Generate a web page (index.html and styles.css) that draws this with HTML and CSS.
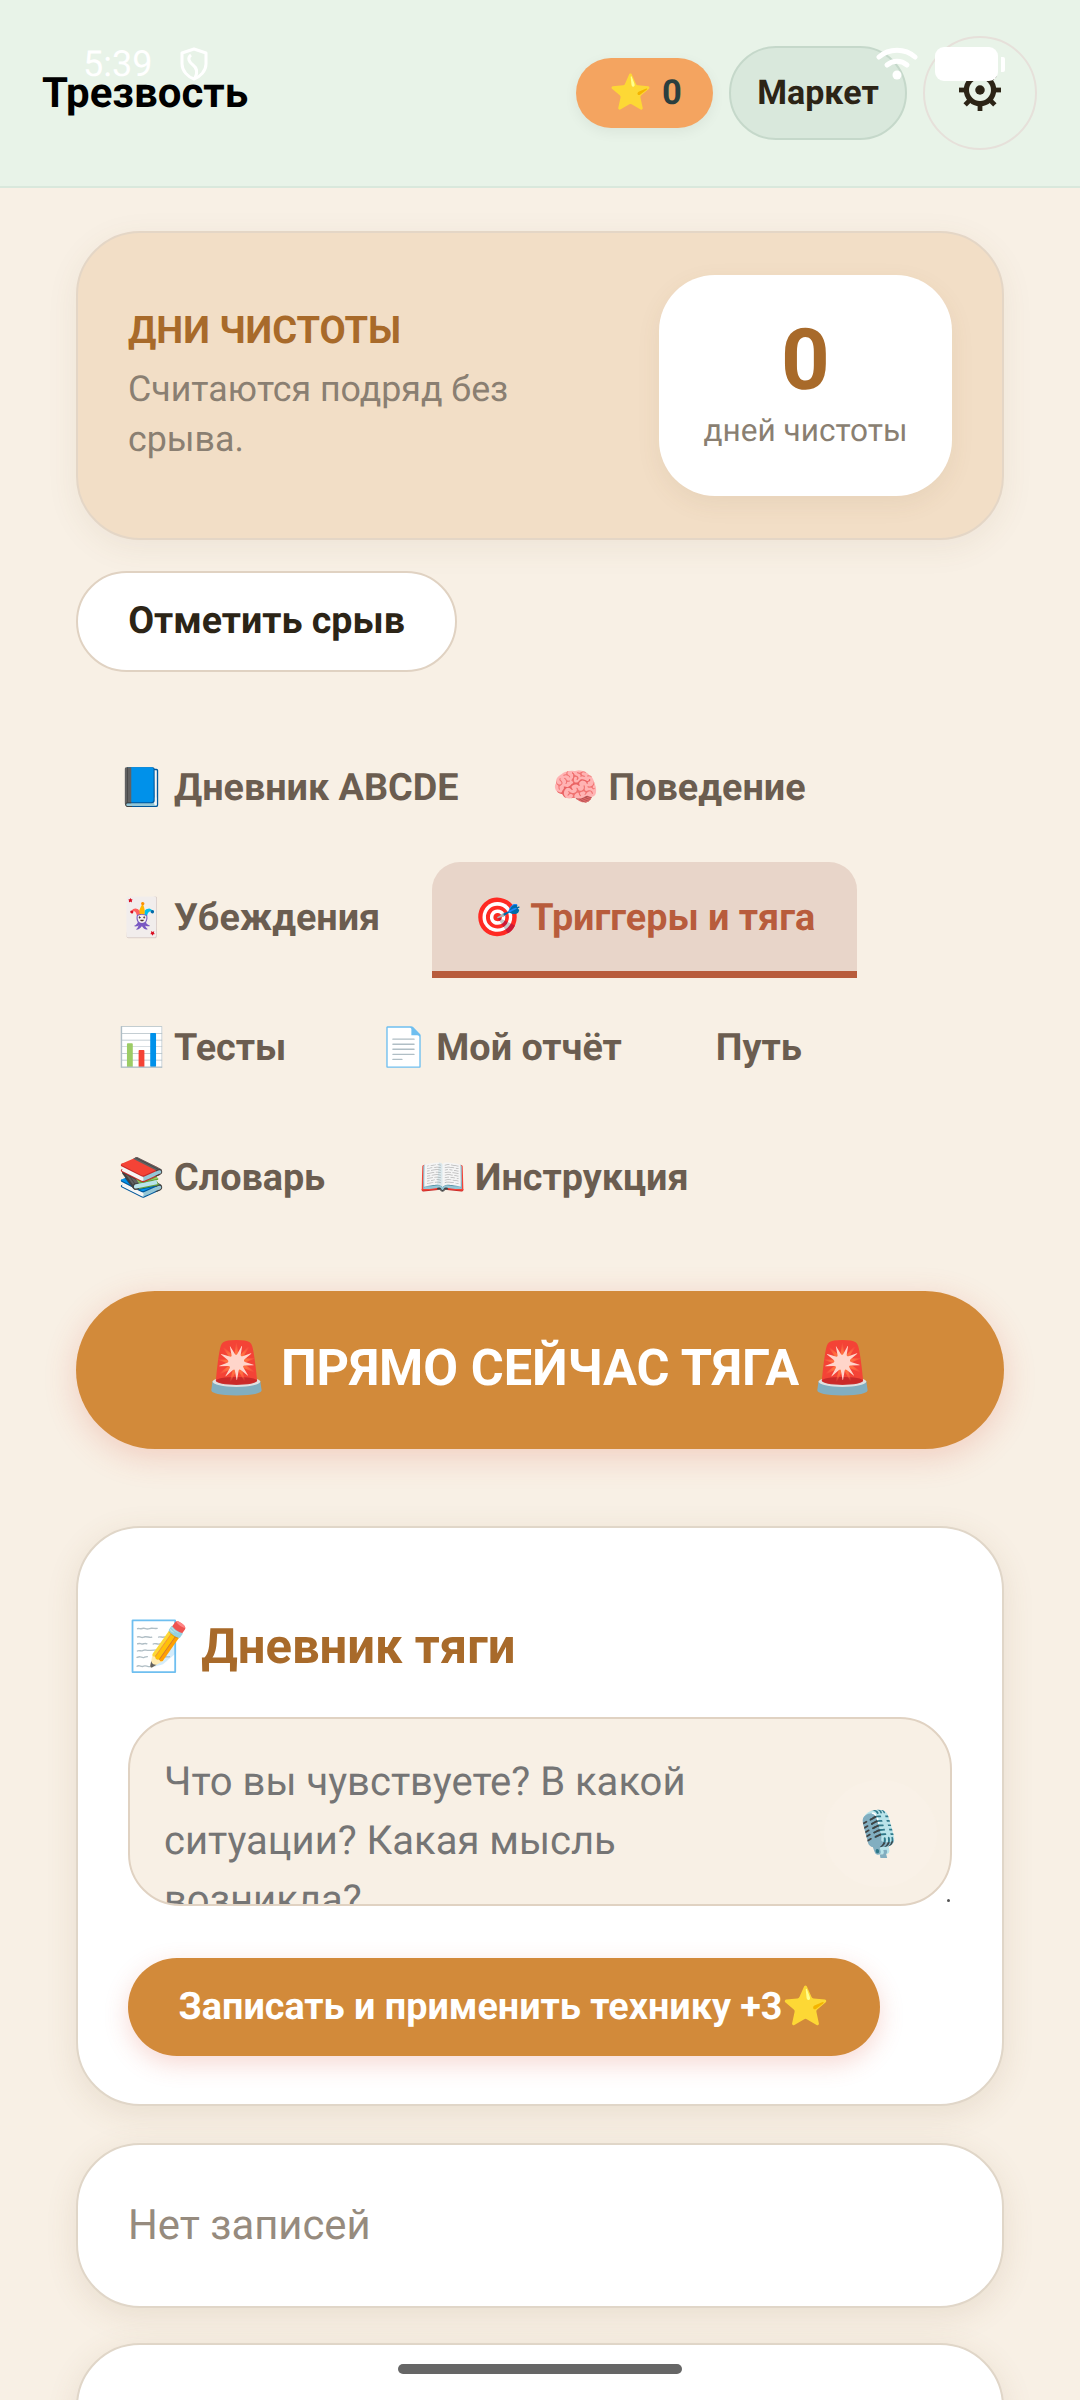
FILE: index.html
```html
<!DOCTYPE html>
<html lang="ru">
<head>
<meta charset="utf-8">
<title>Трезвость</title>
<link rel="stylesheet" href="styles.css">
</head>
<body>
<div class="statusbar">
  <span class="time">5:39</span>
  <svg class="shield" viewBox="0 0 28 34" width="28" height="34"><path d="M14 2 L26 6 V17 C26 24 20 30 14 32 C8 30 2 24 2 17 V6 Z M11 8 C7 11 9 15 13 18 C17 21 18 25 15 31" fill="none" stroke="#fff" stroke-width="3" stroke-linejoin="round"/></svg>
  <span class="status-spacer"></span>
  <svg class="wifi" viewBox="0 0 42 36" width="42" height="36"><path d="M3 11 C13 2 29 2 39 11" fill="none" stroke="#fff" stroke-width="5" stroke-linecap="round"/><path d="M11 19 C17 14 25 14 31 19" fill="none" stroke="#fff" stroke-width="5" stroke-linecap="round"/><circle cx="21" cy="29" r="4.5" fill="#fff"/></svg>
  <span class="battery"></span>
  <span class="battery-tip"></span>
</div>
<header class="topbar">
  <h1 class="brand">Трезвость</h1>
  <div class="top-actions">
    <div class="stars"><span class="emoji">⭐</span> 0</div>
    <button class="market">Маркет</button>
    <button class="gear-btn">
      <svg viewBox="0 0 44 44" width="42" height="42"><g fill="#2c2416"><rect x="19.5" y="0" width="5" height="44"/><rect x="19.5" y="0" width="5" height="44" transform="rotate(45 22 22)"/><rect x="19.5" y="0" width="5" height="44" transform="rotate(90 22 22)"/><rect x="19.5" y="0" width="5" height="44" transform="rotate(135 22 22)"/></g><circle cx="22" cy="22" r="17" fill="#2c2416"/><circle cx="22" cy="22" r="11.5" fill="#e8f3e8"/><circle cx="22" cy="22" r="5" fill="#2c2416"/></svg>
    </button>
  </div>
</header>
<main class="page">
  <section class="hero">
    <div class="hero-text">
      <div class="hero-title">дни чистоты</div>
      <p class="hero-sub">Считаются подряд без срыва.</p>
    </div>
    <div class="stat">
      <div class="stat-num">0</div>
      <div class="stat-label">дней чистоты</div>
    </div>
  </section>
  <button class="relapse">Отметить срыв</button>
  <nav class="tabs">
    <a class="tab"><span class="emoji">📘</span> Дневник ABCDE</a>
    <a class="tab"><span class="emoji">🧠</span> Поведение</a>
    <a class="tab"><span class="emoji">🃏</span> Убеждения</a>
    <a class="tab active"><span class="emoji">🎯</span> Триггеры и тяга</a>
    <a class="tab"><span class="emoji">📊</span> Тесты</a>
    <a class="tab"><span class="emoji">📄</span> Мой отчёт</a>
    <a class="tab">Путь</a>
    <a class="tab"><span class="emoji">📚</span> Словарь</a>
    <a class="tab"><span class="emoji">📖</span> Инструкция</a>
  </nav>
  <button class="cta"><span class="emoji">🚨</span> ПРЯМО СЕЙЧАС ТЯГА <span class="emoji">🚨</span></button>
  <section class="card journal">
    <h2 class="journal-title"><span class="emoji">📝</span> Дневник тяги</h2>
    <div class="field">
      <textarea class="entry" placeholder="Что вы чувствуете? В какой ситуации? Какая мысль возникла?"></textarea>
      <button class="mic"><span class="emoji">🎙️</span></button>
    </div>
    <button class="save">Записать и применить технику +3<span class="emoji">⭐</span></button>
  </section>
  <section class="card empty">Нет записей</section>
  <section class="card next"></section>
</main>
<div class="home-bar"></div>
</body>
</html>
```

FILE: styles.css
```css
* { box-sizing: border-box; }
html, body { margin: 0; height: 2400px; overflow: hidden; }
body {
  position: relative;
  background: #f8f0e5;
  color: #2c2416;
  font-family: Roboto, "Noto Sans", sans-serif;
  text-rendering: geometricPrecision;
}
button { font-family: inherit; cursor: pointer; text-rendering: geometricPrecision; }
.emoji { font-family: "Noto Color Emoji", sans-serif; font-weight: 400; }

.statusbar {
  position: absolute;
  top: 44px; left: 83px; right: 75px;
  height: 40px;
  display: flex;
  align-items: center;
  color: #fff;
  z-index: 5;
}
.time { font-size: 36px; line-height: 40px; }
.shield { margin-left: 28px; }
.status-spacer { flex: 1; }
.wifi { margin-right: 17px; }
.battery { width: 63px; height: 34px; background: #fff; border-radius: 9px; }
.battery-tip { width: 4px; height: 15px; margin-left: 3px; background: #fff; border-radius: 0 2px 2px 0; }

.topbar {
  height: 188px;
  padding: 0 43px 0 42px;
  display: flex;
  align-items: center;
  justify-content: space-between;
  background: #e8f3e8;
  border-bottom: 2px solid #d9e8dc;
}
.brand { margin: 0; font-size: 42px; font-weight: 700; color: #000; }
.top-actions { display: flex; align-items: center; gap: 16px; }
.stars {
  width: 137px; height: 70px;
  padding-left: 2px;
  display: flex; align-items: center; justify-content: center; gap: 10px;
  border-radius: 35px;
  background: #f4a460;
  color: #2a3f3f;
  font-size: 34.5px; font-weight: 700;
  box-shadow: 0 4px 14px rgba(0,0,0,.06);
}
.market {
  width: 178px; height: 94px;
  border: 2px solid #c5d8ca;
  border-radius: 47px;
  background: #d9e8dc;
  color: #2c2416;
  font-size: 34px; font-weight: 700;
  padding: 0;
}
.gear-btn {
  width: 114px; height: 114px;
  display: flex; align-items: center; justify-content: center;
  border: 2px solid #e6e0da;
  border-radius: 50%;
  background: transparent;
  padding: 0 0 6px;
}

.page { padding: 43px 76px 0; }
.hero {
  height: 309px;
  padding: 0 50px;
  display: flex;
  align-items: center;
  justify-content: space-between;
  background: #f2dec6;
  border: 2px solid #e4d6c6;
  border-radius: 64px;
  box-shadow: 0 8px 32px rgba(120,90,50,.08);
}
.hero-text { width: 430px; }
.hero-title { font-size: 38px; font-weight: 700; color: #a86a2a; text-transform: uppercase; line-height: 44px; margin-top: 1px; }
.hero-sub { margin: 11px 0 0; font-size: 35.75px; line-height: 50px; color: #8a7f72; }
.stat {
  width: 293px; height: 221px;
  display: flex; flex-direction: column; align-items: center; justify-content: center;
  background: #fff;
  border-radius: 56px;
  box-shadow: 0 8px 24px rgba(120,90,50,.08);
}
.stat-num { font-size: 85px; font-weight: 700; color: #a86a2a; line-height: 96px; margin-top: -8px; }
.stat-label { font-size: 31.6px; line-height: 40px; color: #8a7f72; margin-top: 3px; }
.relapse {
  display: block;
  margin-top: 31px;
  width: 381px; height: 101px;
  background: #fff;
  border: 2px solid #e0d2c2;
  border-radius: 51px;
  color: #2c2416;
  font-size: 37.6px; font-weight: 700;
  padding: 0 0 2px;
}

.tabs { margin-top: 60px; display: flex; flex-wrap: wrap; gap: 14px 10px; }
.tab {
  height: 116px;
  padding: 2px 42px 0;
  display: flex; align-items: center; gap: 9px;
  border-bottom: 7px solid transparent;
  border-radius: 28px 28px 0 0;
  font-size: 37.75px; font-weight: 700;
  color: #6b5d50;
  white-space: nowrap;
}
.tab.active { background: #e8d5c9; color: #b85c3c; border-bottom-color: #b85c3c; }

.cta {
  display: block;
  width: 100%; height: 158px;
  margin-top: 53px;
  border: 0;
  border-radius: 79px;
  background: #d28a3a;
  color: #fff;
  font-size: 50.5px; font-weight: 700;
  padding: 0 0 4px;
  box-shadow: 0 8px 32px rgba(220,80,60,.22);
}
.card {
  background: #fff;
  border: 2px solid #e0d6c8;
  border-radius: 64px;
  box-shadow: 0 8px 32px rgba(120,90,50,.12);
}
.journal { margin-top: 77px; height: 580px; padding: 84px 50px 0; }
.journal-title { margin: 0; font-size: 49px; font-weight: 700; line-height: 70px; color: #a86a2a; }
.field { position: relative; margin-top: 35px; height: 189px; }
.field::after {
  content: "";
  position: absolute;
  right: 2px; bottom: 4px;
  width: 3px; height: 3px;
  border-radius: 50%;
  background: #555;
}
.entry {
  display: block;
  width: 100%; height: 189px;
  padding: 33px 140px 0 34px;
  background: #f8f0e5;
  border: 2px solid #e0d2c2;
  border-radius: 52px;
  font-family: inherit;
  font-size: 40px; line-height: 59px;
  color: #2c2416;
  overflow: hidden;
  resize: none;
  text-rendering: geometricPrecision;
}
.mic {
  position: absolute;
  right: 15px; top: 63px;
  width: 113px; height: 107px;
  border: 0;
  border-radius: 50%;
  background: #f9f1e7;
  font-size: 44px;
  padding: 0 4px 0 0;
}
.save {
  display: block;
  margin-top: 52px;
  width: 752px; height: 98px;
  border: 0;
  border-radius: 49px;
  background: #d28a3a;
  color: #fff;
  font-size: 37.75px; font-weight: 700;
  padding: 0;
  box-shadow: 0 8px 24px rgba(220,80,60,.22);
}
.empty {
  margin-top: 37px;
  height: 165px;
  padding: 0 50px 0;
  display: flex; align-items: center;
  font-size: 41.8px;
  color: #968b7e;
}
.next { margin-top: 35px; height: 200px; }
.home-bar {
  position: absolute;
  left: 398px; top: 2364px;
  width: 284px; height: 10px;
  border-radius: 5px;
  background: #666;
}
```
